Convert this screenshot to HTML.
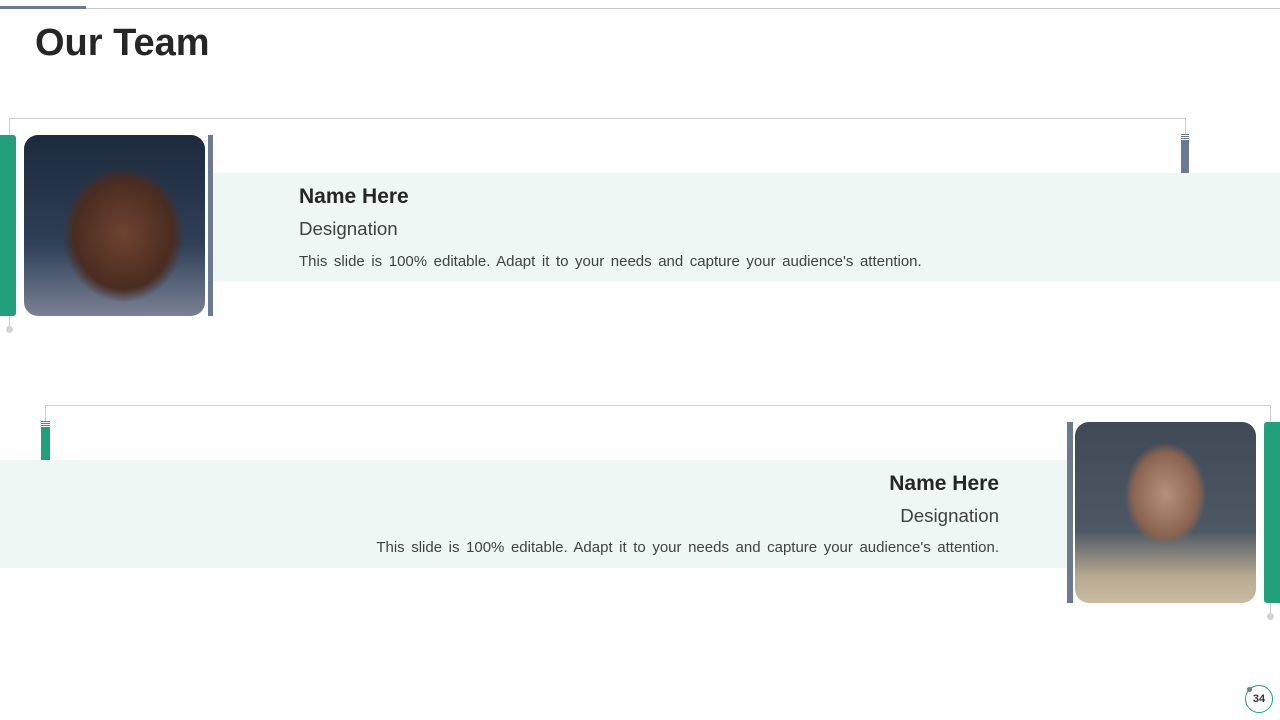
<!DOCTYPE html>
<html><head><style>
body{margin:0;width:1280px;height:720px;position:relative;background:#fff;font-family:"Liberation Sans",sans-serif;overflow:hidden}
.a{position:absolute}
.d{font-size:15px;color:#404040;word-spacing:2.4px}
</style></head><body>
<div class="a" style="left:0;top:8px;width:1280px;height:1px;background:#c8c8c8"></div>
<div class="a" style="left:0;top:6px;width:86px;height:3px;background:#6b7a93"></div>
<div class="a" style="left:35px;top:22px;font-size:38px;font-weight:bold;color:#262626">Our Team</div>

<!-- card 1 -->
<div class="a" style="left:9px;top:118px;width:1176px;height:1px;background:#d0d0d0"></div>
<div class="a" style="left:9px;top:118px;width:1px;height:210px;background:#d0d0d0"></div>
<div class="a" style="left:6px;top:326px;width:7px;height:7px;border-radius:50%;background:#d4d4d4"></div>
<div class="a" style="left:1185px;top:118px;width:1px;height:18px;background:#d0d0d0"></div>
<div class="a" style="left:1181px;top:134px;width:8px;height:39px;background:repeating-linear-gradient(#6b7a93 0 1px,#fff 1px 2px) top/100% 7px no-repeat,#6b7a93"></div>
<div class="a" style="left:213px;top:173px;width:1067px;height:108px;background:#eff7f4"></div>
<div class="a" style="left:0;top:135px;width:16px;height:181px;background:#22a07b;border-radius:0 3px 3px 0"></div>
<div class="a" style="left:24px;top:135px;width:181px;height:181px;border-radius:14px;background:radial-gradient(ellipse 45% 50% at 55% 55%,#6e4330,#4a2c20 60%,transparent 75%),linear-gradient(180deg,#1d2a3d,#2e3f57 60%,#7b8194)"></div>
<div class="a" style="left:208px;top:135px;width:5px;height:181px;background:#6b7a93"></div>
<div class="a" style="left:299px;top:185px;font-size:21px;font-weight:bold;color:#262626">Name Here</div>
<div class="a" style="left:299px;top:218px;font-size:18.7px;color:#404040">Designation</div>
<div class="a d" style="left:299px;top:253px">This slide is 100% editable. Adapt it to your needs and capture your audience's attention.</div>

<!-- card 2 -->
<div class="a" style="left:45px;top:405px;width:1226px;height:1px;background:#d0d0d0"></div>
<div class="a" style="left:45px;top:405px;width:1px;height:18px;background:#d0d0d0"></div>
<div class="a" style="left:1270px;top:405px;width:1px;height:210px;background:#d0d0d0"></div>
<div class="a" style="left:1267px;top:613px;width:7px;height:7px;border-radius:50%;background:#d4d4d4"></div>
<div class="a" style="left:41px;top:421px;width:9px;height:39px;background:repeating-linear-gradient(#22a07b 0 1px,#fff 1px 2px) top/100% 7px no-repeat,#22a07b"></div>
<div class="a" style="left:0;top:460px;width:1067px;height:108px;background:#eff7f4"></div>
<div class="a" style="left:1264px;top:422px;width:16px;height:181px;background:#22a07b;border-radius:3px 0 0 3px"></div>
<div class="a" style="left:1075px;top:422px;width:181px;height:181px;border-radius:14px;background:radial-gradient(ellipse 30% 38% at 50% 40%,#b5917a,#8a6450 60%,transparent 75%),linear-gradient(180deg,#3f4a56,#4d5864 60%,#b5a88f 85%,#c9bca3)"></div>
<div class="a" style="left:1067px;top:422px;width:6px;height:181px;background:#6b7a93"></div>
<div class="a" style="right:281px;top:472px;font-size:21px;font-weight:bold;color:#262626">Name Here</div>
<div class="a" style="right:281px;top:505px;font-size:18.7px;color:#404040">Designation</div>
<div class="a d" style="right:281px;top:539px">This slide is 100% editable. Adapt it to your needs and capture your audience's attention.</div>

<div class="a" style="left:1245px;top:685px;width:26px;height:26px;border:1px solid #22a07b;border-radius:50%;text-align:center;line-height:26px;font-size:11px;font-weight:bold;color:#333">34</div>
<div class="a" style="left:1247px;top:687px;width:5px;height:5px;border-radius:50%;background:#6b7a93"></div>
</body></html>
